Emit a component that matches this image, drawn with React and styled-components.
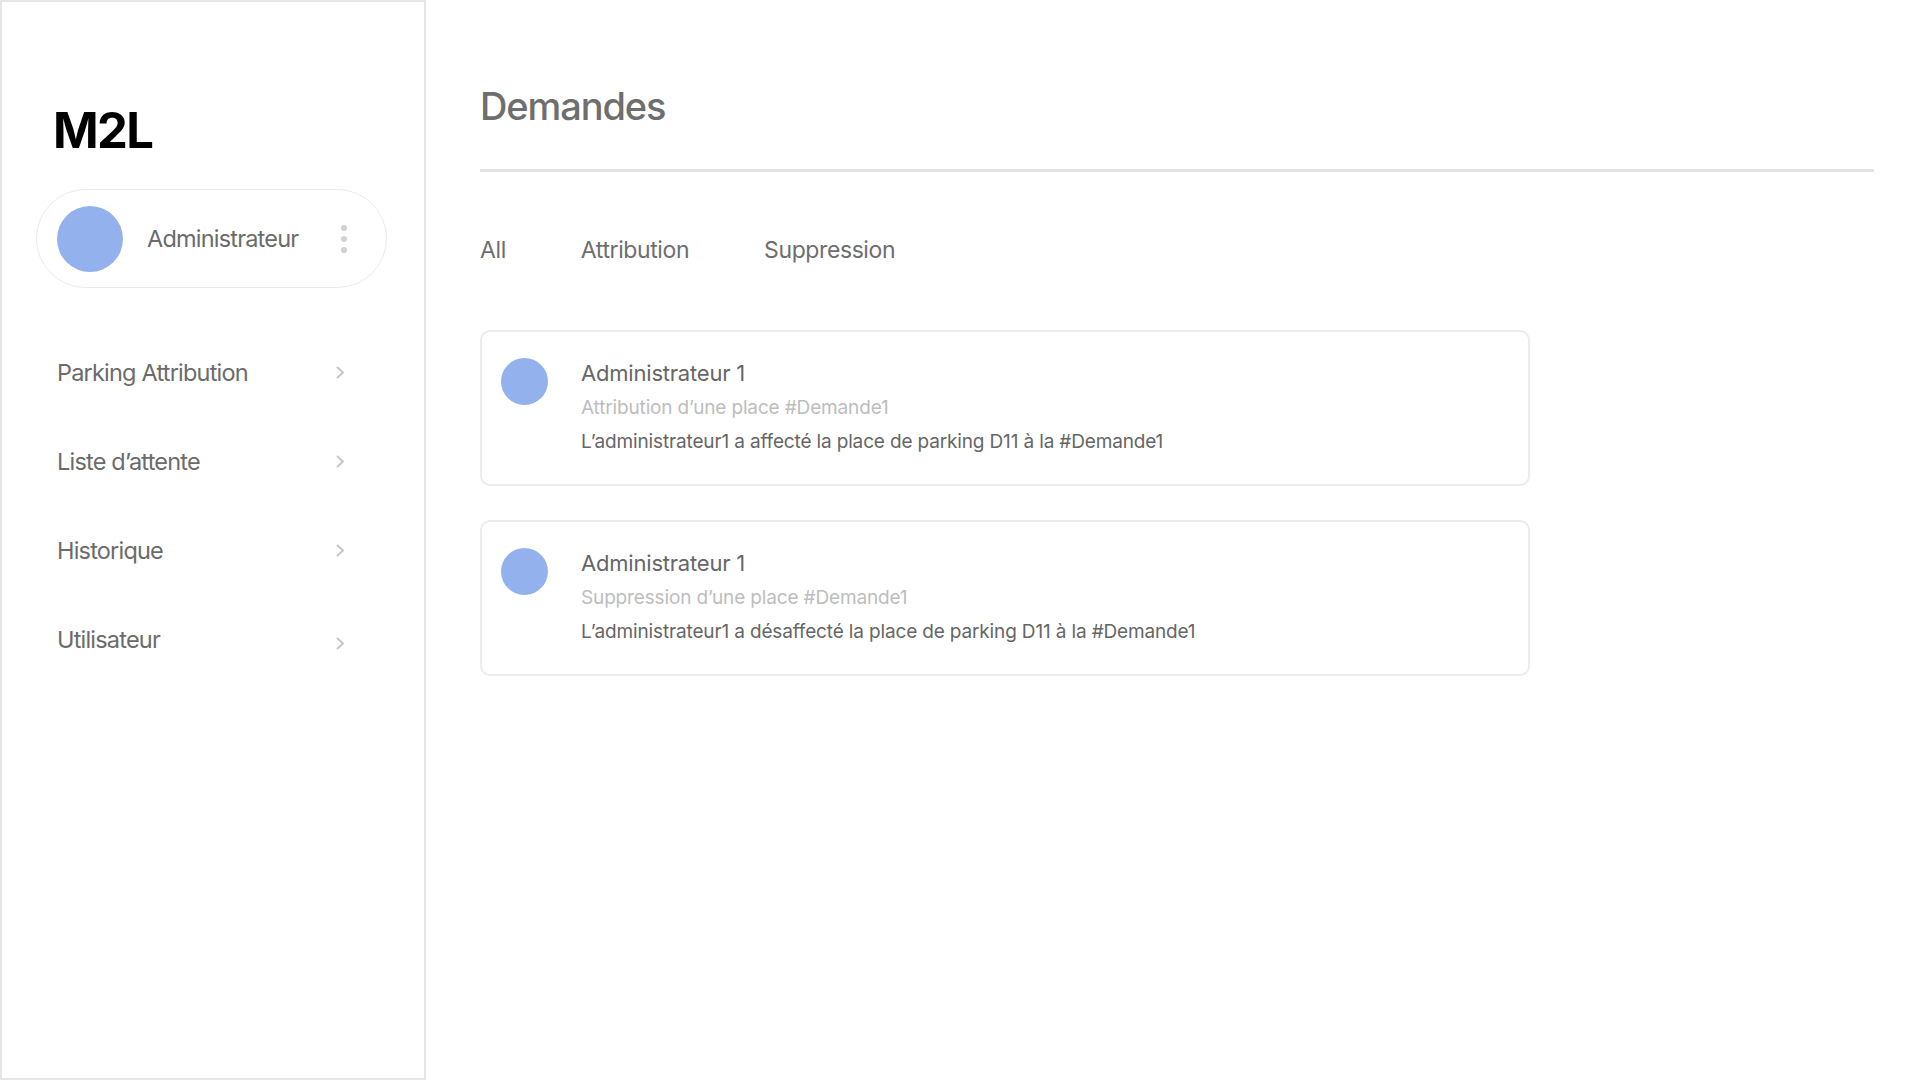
import React from 'react';
import styled, { createGlobalStyle } from 'styled-components';

const GlobalStyle = createGlobalStyle`
  html, body {
    margin: 0;
    padding: 0;
    background: #ffffff;
    font-family: 'Inter', 'Liberation Sans', sans-serif;
  }
  * {
    box-sizing: border-box;
  }
`;

const Page = styled.div`
  display: flex;
  width: 100%;
  height: 100vh;
`;

const Sidebar = styled.aside`
  width: 426px;
  flex-shrink: 0;
  border: 2px solid #e6e6e6;
  padding: 104px 37px 0 34px;
  display: flex;
  flex-direction: column;
`;

const Logo = styled.h1`
  margin: 0;
  padding-left: 17px;
  font-size: 49px;
  line-height: 50px;
  font-weight: 700;
  color: #000;
  letter-spacing: -1.6px;
`;

const Profile = styled.div`
  margin-top: 33px;
  height: 99px;
  border: 1px solid #ebebeb;
  border-radius: 50px;
  display: flex;
  align-items: center;
  padding: 0 20px;
`;

const Avatar = styled.div`
  width: ${(p) => p.$size}px;
  height: ${(p) => p.$size}px;
  border-radius: 50%;
  background: #93b1ed;
  flex-shrink: 0;
`;

const ProfileName = styled.span`
  flex: 1;
  margin-left: 24px;
  font-size: 23.5px;
  color: #6b6b6b;
  letter-spacing: -0.8px;
`;

const Dots = styled.div`
  display: flex;
  flex-direction: column;
  gap: 5px;
  margin-right: 19px;

  span {
    width: 6px;
    height: 6px;
    border-radius: 50%;
    background: #d2d2d2;
  }
`;

const Nav = styled.nav`
  margin-top: 40px;
  display: flex;
  flex-direction: column;
`;

const NavItem = styled.a`
  height: 89px;
  display: flex;
  align-items: center;
  justify-content: space-between;
  padding: 0 42px 0 21px;
  font-size: 23.5px;
  line-height: 24px;
  color: #6b6b6b;
  letter-spacing: -0.8px;
  text-decoration: none;
  cursor: pointer;
`;

const Chevron = styled.svg`
  width: 9px;
  height: 13px;
  margin-top: ${(p) => (p.$low ? '8px' : '0')};
`;

const Main = styled.main`
  flex: 1;
  padding: 86px 46px 0 54px;
  display: flex;
  flex-direction: column;
`;

const Title = styled.h2`
  margin: 0;
  font-size: 38px;
  line-height: 40px;
  font-weight: 500;
  color: #6e6e6e;
  letter-spacing: -1.1px;
`;

const Divider = styled.div`
  margin-top: 43px;
  height: 3px;
  background: #e3e3e3;
`;

const Tabs = styled.div`
  margin-top: 66px;
  display: flex;
  gap: 75px;
`;

const Tab = styled.button`
  border: none;
  background: none;
  padding: 0;
  font-family: inherit;
  font-size: 23px;
  line-height: 24px;
  color: #6e6e6e;
  letter-spacing: -0.4px;
  cursor: pointer;
`;

const List = styled.div`
  margin-top: 68px;
  display: flex;
  flex-direction: column;
  gap: 34px;
`;

const Card = styled.div`
  width: 1050px;
  border: 2px solid #ececec;
  border-radius: 10px;
  padding: 26px 19px 28px;
  display: flex;
  gap: 33px;
`;

const CardBody = styled.div`
  margin-top: 3px;
  display: flex;
  flex-direction: column;
`;

const CardTitle = styled.div`
  font-size: 22px;
  line-height: 24px;
  color: #666;
  letter-spacing: -0.2px;
`;

const CardLine = styled.div`
  margin-top: ${(p) => (p.$muted ? '9px' : '6px')};
  font-size: 19px;
  line-height: 28px;
  color: ${(p) => (p.$muted ? '#bdbdbd' : '#666')};
  letter-spacing: -0.15px;
`;

const ChevronIcon = ({ low }) => (
  <Chevron viewBox="0 0 9 13" $low={low}>
    <path d="M1.5 1.5 L7 6.5 L1.5 11.5" fill="none" stroke="#c6c6c6" strokeWidth="2" strokeLinecap="round" strokeLinejoin="round" />
  </Chevron>
);

const navItems = ['Parking Attribution', 'Liste d’attente', 'Historique', 'Utilisateur'];

const requests = [
  {
    name: 'Administrateur 1',
    type: 'Attribution d’une place #Demande1',
    text: 'L’administrateur1 a affecté la place de parking D11 à la #Demande1',
  },
  {
    name: 'Administrateur 1',
    type: 'Suppression d’une place #Demande1',
    text: 'L’administrateur1 a désaffecté la place de parking D11 à la #Demande1',
  },
];

const App = () => {
  return (
    <>
      <GlobalStyle />
      <Page>
        <Sidebar>
          <Logo>M2L</Logo>
          <Profile>
            <Avatar $size={66} />
            <ProfileName>Administrateur</ProfileName>
            <Dots>
              <span />
              <span />
              <span />
            </Dots>
          </Profile>
          <Nav>
            {navItems.map((item, i) => (
              <NavItem key={item}>
                {item}
                <ChevronIcon low={i === navItems.length - 1} />
              </NavItem>
            ))}
          </Nav>
        </Sidebar>
        <Main>
          <Title>Demandes</Title>
          <Divider />
          <Tabs>
            <Tab>All</Tab>
            <Tab>Attribution</Tab>
            <Tab>Suppression</Tab>
          </Tabs>
          <List>
            {requests.map((r) => (
              <Card key={r.type}>
                <Avatar $size={47} />
                <CardBody>
                  <CardTitle>{r.name}</CardTitle>
                  <CardLine $muted>{r.type}</CardLine>
                  <CardLine>{r.text}</CardLine>
                </CardBody>
              </Card>
            ))}
          </List>
        </Main>
      </Page>
    </>
  );
};

export default App;
